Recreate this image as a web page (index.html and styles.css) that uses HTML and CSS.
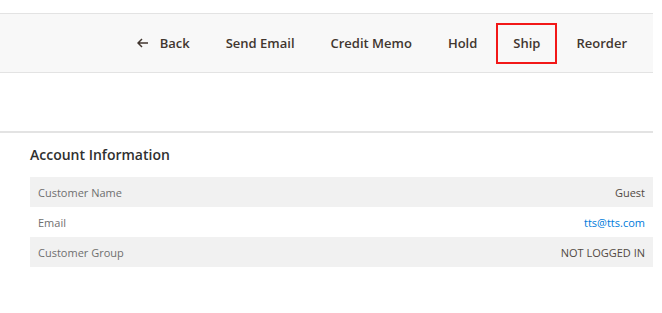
FILE: index.html
```html
<!DOCTYPE html>
<html lang="en">
<head>
    <meta charset="UTF-8">
    <meta name="viewport" content="width=device-width, initial-scale=1.0">
    <title>Order View</title>
    <link rel="stylesheet" href="styles.css">
</head>
<body>

<div class="page">
    <div class="page-actions">
        <button class="action back">
            <svg class="back-icon" width="11" height="10" viewBox="0 0 11 10">
                <path d="M5 1 L1 5 L5 9 M1 5 H11" fill="none" stroke="#41362f" stroke-width="1.5"/>
            </svg>
            Back
        </button>
        <button class="action">Send Email</button>
        <button class="action">Credit Memo</button>
        <button class="action">Hold</button>
        <button class="action highlighted">Ship</button>
        <button class="action">Reorder</button>
    </div>

    <div class="spacer"></div>

    <section class="account-info">
        <h2>Account Information</h2>
        <table class="info-table">
            <tbody>
                <tr>
                    <th>Customer Name</th>
                    <td>Guest</td>
                </tr>
                <tr>
                    <th>Email</th>
                    <td><a href="#">tts@tts.com</a></td>
                </tr>
                <tr>
                    <th>Customer Group</th>
                    <td>NOT LOGGED IN</td>
                </tr>
            </tbody>
        </table>
    </section>
</div>

</body>
</html>
```

FILE: styles.css
```css
body {
    margin: 0;
    padding: 0;
    background-color: #ffffff;
    font-family: "Open Sans", "Liberation Sans", sans-serif;
    color: #303030;
}
.page {
    width: 653px;
    padding-top: 13px;
}
.page-actions {
    display: flex;
    justify-content: flex-end;
    align-items: center;
    gap: 2px;
    height: 58px;
    padding-right: 9px;
    background-color: #f8f8f8;
    border-top: 1px solid #e3e3e3;
    border-bottom: 1px solid #e3e3e3;
}
.action {
    display: inline-flex;
    align-items: center;
    height: 41px;
    padding: 0 15px;
    border: 2px solid transparent;
    background: none;
    font-family: inherit;
    font-size: 13px;
    font-weight: 600;
    color: #41362f;
    cursor: pointer;
}
.action.highlighted {
    border-color: #f21818;
}
.back-icon {
    margin-right: 12px;
}
.spacer {
    height: 58px;
    border-bottom: 2px solid #e3e3e3;
}
.account-info {
    padding-left: 30px;
}
.account-info h2 {
    margin: 0;
    padding: 12px 0 13px;
    font-size: 14px;
    line-height: 19px;
    font-weight: 600;
    color: #303030;
}
.info-table {
    width: 100%;
    border-collapse: collapse;
    font-size: 11px;
}
.info-table th,
.info-table td {
    height: 30px;
    padding: 0 8px;
    font-weight: 400;
}
.info-table th {
    text-align: left;
    color: #6f6f6f;
}
.info-table td {
    text-align: right;
    color: #514943;
}
.info-table tr:nth-child(odd) {
    background-color: #f1f1f1;
}
.info-table a {
    color: #007bdb;
    text-decoration: none;
}
```
